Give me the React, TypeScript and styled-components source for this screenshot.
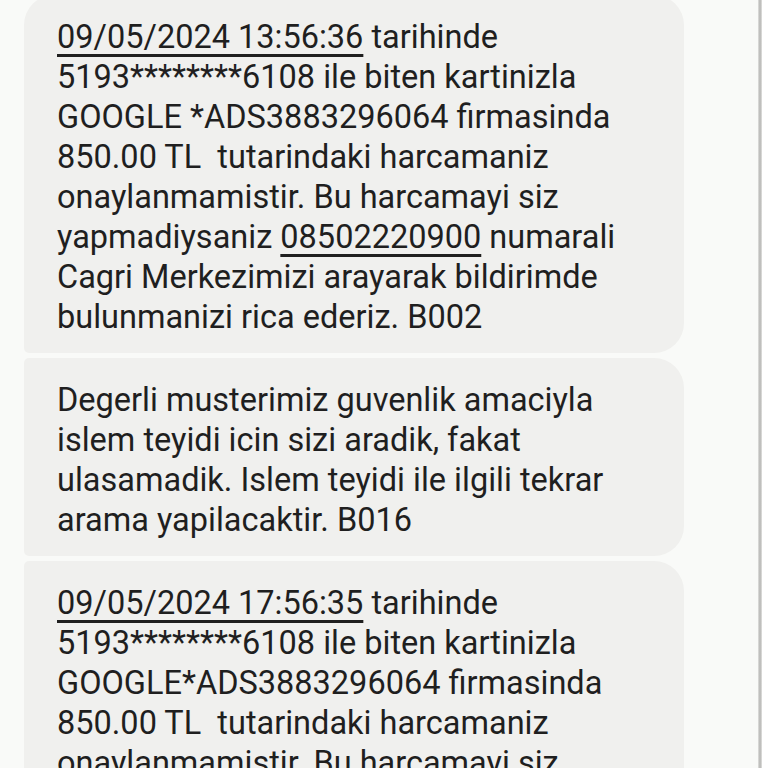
import styled, { createGlobalStyle } from 'styled-components';

const GlobalStyle = createGlobalStyle`
  html, body {
    margin: 0;
    padding: 0;
    height: 100%;
    overflow: hidden;
    background: #f9faf8;
  }
  #root {
    height: 100%;
  }
`;

interface Part {
  text: string;
  link?: boolean;
}

interface Message {
  id: string;
  first?: boolean;
  lines: Part[][];
}

const messages: Message[] = [
  {
    id: 'm1',
    first: true,
    lines: [
      [{ text: '09/05/2024 13:56:36', link: true }, { text: ' tarihinde' }],
      [{ text: '5193********6108 ile biten kartinizla' }],
      [{ text: 'GOOGLE *ADS3883296064 firmasinda' }],
      [{ text: '850.00 TL  tutarindaki harcamaniz' }],
      [{ text: 'onaylanmamistir. Bu harcamayi siz' }],
      [
        { text: 'yapmadiysaniz ' },
        { text: '08502220900', link: true },
        { text: ' numarali' },
      ],
      [{ text: 'Cagri Merkezimizi arayarak bildirimde' }],
      [{ text: 'bulunmanizi rica ederiz. B002' }],
    ],
  },
  {
    id: 'm2',
    lines: [
      [{ text: 'Degerli musterimiz guvenlik amaciyla' }],
      [{ text: 'islem teyidi icin sizi aradik, fakat' }],
      [{ text: 'ulasamadik. Islem teyidi ile ilgili tekrar' }],
      [{ text: 'arama yapilacaktir. B016' }],
    ],
  },
  {
    id: 'm3',
    lines: [
      [{ text: '09/05/2024 17:56:35', link: true }, { text: ' tarihinde' }],
      [{ text: '5193********6108 ile biten kartinizla' }],
      [{ text: 'GOOGLE*ADS3883296064 firmasinda' }],
      [{ text: '850.00 TL  tutarindaki harcamaniz' }],
      [{ text: 'onaylanmamistir. Bu harcamayi siz' }],
    ],
  },
];

export default function App() {
  return (
    <>
      <GlobalStyle />
      <Screen>
        <Thread>
          {messages.map((m) => (
            <Bubble key={m.id} $first={m.first}>
              {m.lines.map((line, i) => (
                <Line key={i}>
                  {line.map((p, j) =>
                    p.link ? <Link key={j}>{p.text}</Link> : <span key={j}>{p.text}</span>
                  )}
                </Line>
              ))}
            </Bubble>
          ))}
        </Thread>
        <Scrollbar />
        <Edge />
      </Screen>
    </>
  );
}

const Screen = styled('div')`
  height: 768px;
  display: flex;
  align-items: stretch;
  padding-left: 24px;
  box-sizing: border-box;
  overflow: hidden;
`;

const Thread = styled('div')`
  flex: 0 0 660px;
  margin-top: -5px;
  display: flex;
  flex-direction: column;
  gap: 5px;
`;

const Bubble = styled('div')<{ $first?: boolean }>`
  background: #f0f0ee;
  border-radius: ${({ $first }) => ($first ? '30px' : '5px')} 30px 30px 5px;
  padding: 22px 20px 16px 33px;
  color: #1f1f1f;
  font-family: Roboto, 'Noto Sans', sans-serif;
  font-size: 32.5px;
  line-height: 40px;
  white-space: pre;
  flex-shrink: 0;
`;

const Line = styled('div')``;

const Link = styled('span')`
  text-decoration: underline;
  text-decoration-thickness: 2.5px;
  text-underline-offset: 6px;
`;

const Scrollbar = styled('div')`
  flex: 0 0 4px;
  margin-left: auto;
  background: linear-gradient(to right, #e2e2e0, #bdbdbb 40%, #bdbdbb 60%, #e2e2e0);
`;

const Edge = styled('div')`
  flex: 0 0 6px;
  background: #ffffff;
`;
